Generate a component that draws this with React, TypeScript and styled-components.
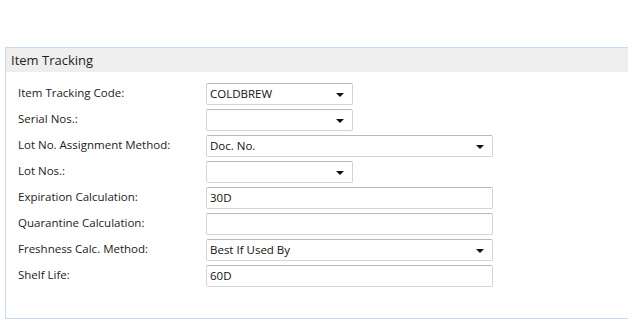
import React from 'react';
import styled, { createGlobalStyle } from 'styled-components';

const GlobalStyle = createGlobalStyle`
  html, body {
    margin: 0;
    padding: 0;
    background: #ffffff;
    overflow: hidden;
  }
  body {
    font-family: "Open Sans", "Noto Sans", sans-serif;
  }
`;

const Page = styled.div`
  width: 628px;
  height: 321px;
  padding: 47px 0 0 5px;
  box-sizing: border-box;
  overflow: hidden;
`;

const Panel = styled.section`
  width: 660px;
  height: 272px;
  box-sizing: border-box;
  border: 1px solid #c7daf3;
  border-right: none;
`;

const Header = styled.div`
  height: 24px;
  background: #eeeeee;
  display: flex;
  align-items: center;
  padding-left: 5px;
  font-size: 13px;
  color: #1e1e1e;
`;

const Form = styled.div`
  display: grid;
  grid-template-columns: 188px auto;
  row-gap: 4px;
  padding: 11px 0 0 12px;
  justify-content: start;
`;

const Label = styled.div`
  font-size: 11.5px;
  color: #222;
  display: flex;
  align-items: center;
  height: 22px;
  padding-bottom: 3px;
  box-sizing: border-box;
`;

const Field = styled.div<{ $wide?: boolean }>`
  width: ${p => (p.$wide ? '287px' : '147px')};
  height: 22px;
  box-sizing: border-box;
  border: 1px solid #d4d4d4;
  border-top-color: #b9b9b9;
  border-radius: 2px;
  display: flex;
  align-items: center;
  padding: 0 8px 0 3px;
  font-size: 11.5px;
  color: #111;
`;

const Value = styled.span`
  flex: 1;
  margin-bottom: 2px;
`;

const Arrow = styled.span`
  width: 0;
  height: 0;
  border-left: 4px solid transparent;
  border-right: 4px solid transparent;
  border-top: 4px solid #111;
  margin-top: 1px;
`;

interface Row {
  label: string;
  value: string;
  wide?: boolean;
  dropdown?: boolean;
}

const rows: Row[] = [
  { label: 'Item Tracking Code:', value: 'COLDBREW', dropdown: true },
  { label: 'Serial Nos.:', value: '', dropdown: true },
  { label: 'Lot No. Assignment Method:', value: 'Doc. No.', wide: true, dropdown: true },
  { label: 'Lot Nos.:', value: '', dropdown: true },
  { label: 'Expiration Calculation:', value: '30D', wide: true },
  { label: 'Quarantine Calculation:', value: '', wide: true },
  { label: 'Freshness Calc. Method:', value: 'Best If Used By', wide: true, dropdown: true },
  { label: 'Shelf Life:', value: '60D', wide: true },
];

export default function App() {
  return (
    <>
      <GlobalStyle />
      <Page>
        <Panel>
          <Header>Item Tracking</Header>
          <Form>
            {rows.map(row => (
              <React.Fragment key={row.label}>
                <Label>{row.label}</Label>
                <Field $wide={row.wide}>
                  <Value>{row.value}</Value>
                  {row.dropdown && <Arrow />}
                </Field>
              </React.Fragment>
            ))}
          </Form>
        </Panel>
      </Page>
    </>
  );
}
